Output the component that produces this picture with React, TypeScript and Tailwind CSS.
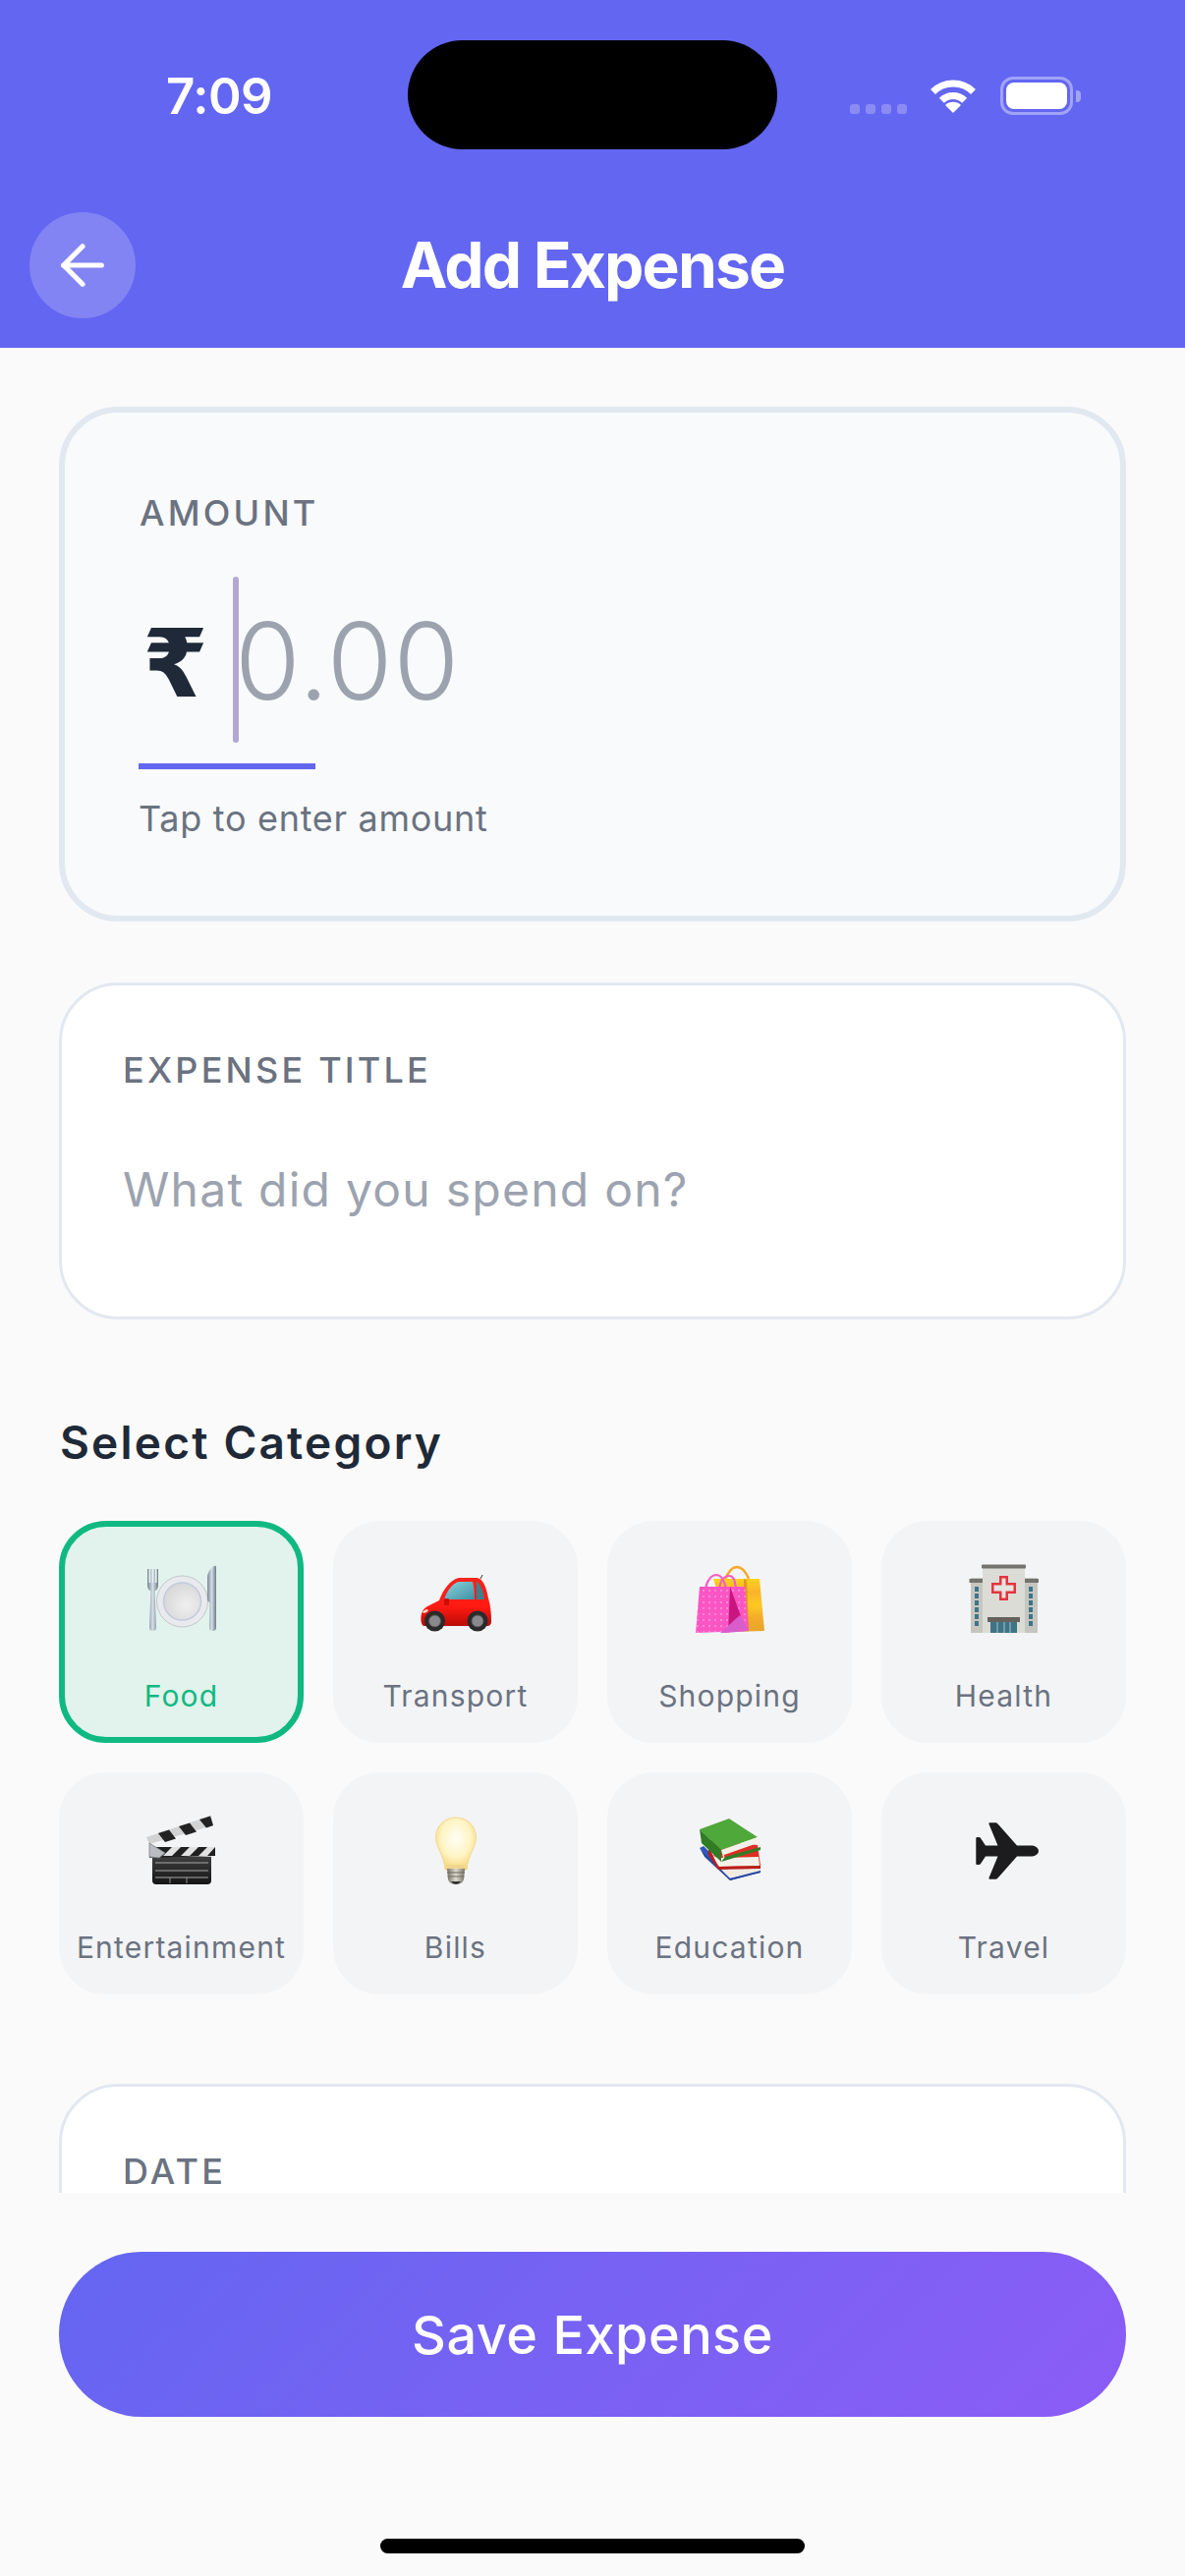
import React from "react";
import { ArrowLeft } from "lucide-react";

const PlateIcon = () => (
  <svg width="72" height="72" viewBox="0 0 72 72">
    <defs>
      <linearGradient id="steel" x1="0" y1="0" x2="1" y2="0">
        <stop offset="0" stopColor="#7d8894" />
        <stop offset="0.5" stopColor="#d3dde8" />
        <stop offset="1" stopColor="#707b87" />
      </linearGradient>
      <radialGradient id="plateIn" cx="0.6" cy="0.6" r="0.7">
        <stop offset="0" stopColor="#f0f0f0" />
        <stop offset="1" stopColor="#d4d4d6" />
      </radialGradient>
    </defs>
    <path d="M1 5h1.600v14h1.500V5h1.700v14h1.500V5H9v14h1.600V5H12v17c0 3-2 5-3.400 5.500L10 64c.1 3-1.500 4-3.500 4S2.900 67 3 64l1.400-36.500C2.700 27 1 25 1 22z" fill="url(#steel)" />
    <circle cx="36.500" cy="38" r="26" fill="#e8eaee" stroke="#b9bcc2" strokeWidth="0.800" />
    <circle cx="36.500" cy="38" r="19" fill="url(#plateIn)" stroke="#c2cbdc" strokeWidth="1.500" />
    <path d="M69 2c1-.5 2-.3 2 1v62c0 2-1.500 3-3.500 3S64 67 64 65l.5-26c-1.500-.5-2.500-1.500-2.500-3V14c0-5 3-9.500 7-12z" fill="url(#steel)" />
  </svg>
);

const CarIcon = () => (
  <svg width="72" height="72" viewBox="0 0 72 72">
    <defs>
      <linearGradient id="carBody" x1="0" y1="0" x2="0" y2="1">
        <stop offset="0" stopColor="#f4261d" />
        <stop offset="0.6" stopColor="#ff1a12" />
        <stop offset="1" stopColor="#b80a06" />
      </linearGradient>
      <linearGradient id="carGlass" x1="0" y1="0" x2="1" y2="1">
        <stop offset="0" stopColor="#8ed5dc" />
        <stop offset="1" stopColor="#3f8fa6" />
      </linearGradient>
    </defs>
    <path d="M61 15l2-4" stroke="#333" strokeWidth="1" />
    <path d="M0.500 58C0 50 2 45 9 42l10-5c4-11 11-21 20-23h18c6 0 10 9 12 21 2 6 3 14 3 23 0 4-2 5-4 5H4c-2 0-3-2-3.500-5z" fill="url(#carBody)" />
    <path d="M24 36c3-9 9-17 15-18h14c1.500 5 2 12 2 18z" fill="url(#carGlass)" />
    <path d="M57 18c4 2 7 10 8 18h-8c0-6 0-12 0-18z" fill="#3f7f8f" />
    <rect x="24" y="35" width="5" height="7" rx="1" fill="#c80f0a" />
    <ellipse cx="5" cy="48" rx="3" ry="1.500" fill="#ffd0c8" transform="rotate(-25 5 48)" />
    <circle cx="14.500" cy="58" r="10.500" fill="#2a2a2c" />
    <circle cx="14.500" cy="58" r="6" fill="#8a8a8e" stroke="#555" strokeWidth="1" />
    <circle cx="58" cy="58" r="10.500" fill="#2a2a2c" />
    <circle cx="58" cy="58" r="6" fill="#8a8a8e" stroke="#555" strokeWidth="1" />
  </svg>
);

const BagsIcon = () => (
  <svg width="72" height="72" viewBox="0 0 72 72">
    <defs>
      <linearGradient id="yellowBag" x1="0" y1="0" x2="0" y2="1">
        <stop offset="0" stopColor="#ffd21f" />
        <stop offset="0.25" stopColor="#f7b52a" />
        <stop offset="0.5" stopColor="#ffc822" />
        <stop offset="0.75" stopColor="#f2ab2a" />
        <stop offset="1" stopColor="#e8a52a" />
      </linearGradient>
      <pattern id="dots" width="6" height="6" patternUnits="userSpaceOnUse">
        <circle cx="3" cy="3" r="0.800" fill="#ffc4ea" />
      </pattern>
    </defs>
    <path d="M31 16c3-8 7-13 12-13s9 5 12 12" fill="none" stroke="#f7a828" strokeWidth="2.500" />
    <path d="M19 15h47l5 53-36 1z" fill="url(#yellowBag)" />
    <path d="M50 15l3 1 2 50-6 2z" fill="#d8861e" opacity="0.700" />
    <path d="M11 26c1-9 6-15 11-15s8 5 10 14M25 26c1-9 5-14 10-14s6 5 7 14" fill="none" stroke="#f55fc1" strokeWidth="2.200" />
    <path d="M5 23h46l4 45-54 2z" fill="#fb55c4" />
    <path d="M5 23h46l4 45-54 2z" fill="url(#dots)" />
    <path d="M36 23l-2 47 13-17z" fill="#c9157f" />
    <path d="M26 70l20-18 9 16-23 2z" fill="#d95ccb" />
  </svg>
);

const HospitalIcon = () => (
  <svg width="72" height="72" viewBox="0 0 72 72">
    <rect x="2" y="14" width="68" height="56" fill="#c6c6c0" />
    <rect x="0.500" y="15" width="14" height="4" fill="#75736e" />
    <rect x="57" y="15" width="14" height="4" fill="#75736e" />
    <rect x="14" y="2" width="43" height="68" fill="#dcdcd6" />
    <rect x="13" y="0.500" width="45" height="4" rx="1" fill="#75736e" />
    <path d="M31 12h9v7h8v11h-8v7h-9v-7h-8V19h8z" fill="#e5343d" />
    <path d="M33.500 14.500h4v7h8v6h-8v7h-4v-7h-8v-6h8z" fill="#e4e4e0" />
    <rect x="19" y="54" width="33" height="5" fill="#66625f" />
    <rect x="22" y="59" width="27" height="11" fill="#3d7486" />
    <path d="M29 59v11M36 59v11M42 59v11" stroke="#a7c1c9" strokeWidth="1" />
    {[23, 30, 37, 44, 51, 58].map((y) => (
      <g key={y}>
        <rect x="6" y={y} width="4" height="5" fill="#3f7488" />
        <rect x="61" y={y} width="4" height="5" fill="#3f7488" />
      </g>
    ))}
  </svg>
);

const ClapperIcon = () => (
  <svg width="72" height="72" viewBox="0 0 72 72">
    <defs>
      <linearGradient id="clapBody" x1="0" y1="0" x2="0" y2="1">
        <stop offset="0" stopColor="#3d3d3d" />
        <stop offset="1" stopColor="#151515" />
      </linearGradient>
    </defs>
    <path d="M6 42h60v24a4 4 0 0 1-4 4H10a4 4 0 0 1-4-4z" fill="url(#clapBody)" />
    <path d="M3 32h67v9l-67 2z" fill="#202020" />
    <path d="M17 41l9-9h9l-9 9zM35 41l9-9h9l-9 9zM53 41l9-9h8l-8 9z" fill="#e2e2e2" />
    <path d="M9 48h54M9 56h54M9 63h54" stroke="#a8a8a8" strokeWidth="1" />
    <path d="M24 63v6M41 63v6" stroke="#a8a8a8" strokeWidth="0.800" />
    <path d="M0 22L66 0l2 10L3 29z" fill="#d2d2d2" />
    <path d="M12 18l11-3.500 7 9-11 3.500zM33 11l11-3.500 7 9-11 3.500zM54 4l11-3.500 3 9.500-7 2.500z" fill="#222" />
    <path d="M3 28l16 10-6 5-10-1z" fill="#b9bdc2" stroke="#7e8388" strokeWidth="0.800" />
  </svg>
);

const BulbIcon = () => (
  <svg width="72" height="72" viewBox="0 0 72 72">
    <defs>
      <radialGradient id="bulb" cx="0.500" cy="0.400" r="0.600">
        <stop offset="0" stopColor="#fffef6" />
        <stop offset="0.600" stopColor="#fff4c4" />
        <stop offset="1" stopColor="#f6d77e" />
      </radialGradient>
      <linearGradient id="screw" x1="0" y1="0" x2="1" y2="0">
        <stop offset="0" stopColor="#77726a" />
        <stop offset="0.500" stopColor="#e0dccf" />
        <stop offset="1" stopColor="#77726a" />
      </linearGradient>
    </defs>
    <path d="M36 2c11.500 0 20.500 8.500 20.500 20 0 11-8 17-9.500 33H25C23.500 39 15.500 33 15.500 22 15.500 10.500 24.500 2 36 2z" fill="url(#bulb)" stroke="#f0d488" strokeWidth="0.800" />
    <rect x="27" y="50" width="18" height="5" fill="#f0d58c" />
    <path d="M27 54h18l-1 11c-1 3-3 5-8 5s-7-2-8-5z" fill="url(#screw)" />
    <path d="M27 58h18M27.500 62h17" stroke="#6f6a60" strokeWidth="1" />
    <path d="M31 67h10c-1 2-3 3-5 3s-4-1-5-3z" fill="#333" />
  </svg>
);

const BooksIcon = () => (
  <svg width="72" height="72" viewBox="0 0 72 72">
    <g transform="translate(0 3)">
      <path d="M5 30l31 33 31-8-1-6-30 6L9 28z" fill="#2f55b8" />
      <path d="M9 40l27 21 31-7-1-8-31 7z" fill="#f0ece4" />
      <path d="M5 30l5 9 26 24 31-8v-2l-31 8z" fill="#2747a3" />
      <path d="M14 22l50 5 3 21-43 2z" fill="#dd2f24" />
      <path d="M16 37l9 12 41-1-1-9-41 1z" fill="#f5f1ea" />
      <path d="M14 28l10 21 43-1v3l-43 1-10-15z" fill="#b81e18" />
      <path d="M5 11l30-11 29 19-37 13z" fill="#4fa83a" />
      <path d="M27 32l37-13 3 5-37 13 1 10z" fill="#f4f1ea" />
      <path d="M5 11l22 21v12L7 25z" fill="#2e7d25" />
      <path d="M27 44l40-12 0-3-36 10z" fill="#2e7d25" />
    </g>
  </svg>
);

const PlaneIcon = () => (
  <svg width="72" height="72" viewBox="0 0 72 72">
    <g transform="translate(3 0)">
      <path d="M68 36c0-3.500-4-5.500-8-5.500H46L26.500 8.500C25.800 7.600 25 7.200 24 7.200h-5.500c-.9 0-1.300.7-1 1.500l9 21.800H14L9 23c-.4-.6-1-1-1.700-1H5.500c-.8 0-1.200.6-1.200 1.300V48.700c0 .7.400 1.300 1.200 1.300h1.800c.7 0 1.300-.4 1.700-1l5-7.500h12.500l-9 21.800c-.3.8.1 1.500 1 1.500H24c1 0 1.800-.4 2.500-1.300L46 41.500h14c4 0 8-2 8-5.500z" fill="#1c1c1e" />
    </g>
  </svg>
);

const categories = [
  { name: "Food", icon: <PlateIcon />, active: true },
  { name: "Transport", icon: <CarIcon /> },
  { name: "Shopping", icon: <BagsIcon /> },
  { name: "Health", icon: <HospitalIcon /> },
  { name: "Entertainment", icon: <ClapperIcon /> },
  { name: "Bills", icon: <BulbIcon /> },
  { name: "Education", icon: <BooksIcon /> },
  { name: "Travel", icon: <PlaneIcon /> },
];

const App = () => {
  return (
    <div className="flex h-[2622px] w-[1206px] flex-col overflow-hidden bg-[#fafafa] [font-family:Inter,sans-serif]">
      {/* Header */}
      <header className="relative h-[354px] shrink-0 bg-[#6366f1] text-white">
        <div className="absolute left-[415px] top-[41px] h-[111px] w-[376px] rounded-[56px] bg-black" />
        <div className="flex h-[196px] items-start justify-between pl-[169px] pr-[106px] pt-[68px]">
          <span className="text-[51px] font-semibold leading-[60px] tracking-[-0.500px]">7:09</span>
          <div className="flex items-start pt-[10px]">
            <div className="mt-[28px] flex gap-[6px]">
              <span className="h-[10px] w-[10px] rounded-[3px] bg-white/25" />
              <span className="h-[10px] w-[10px] rounded-[3px] bg-white/25" />
              <span className="h-[10px] w-[10px] rounded-[3px] bg-white/25" />
              <span className="h-[10px] w-[10px] rounded-[3px] bg-white/25" />
            </div>
            <svg className="ml-[22px]" width="50" height="37" viewBox="0 0 50 37" fill="none">
              <path d="M4.500 15.500a29 29 0 0 1 41 0" stroke="white" strokeWidth="7" />
              <path d="M13.300 24.300a16.500 16.500 0 0 1 23.400 0" stroke="white" strokeWidth="7" />
              <path d="M25 37l-8-8a11.300 11.300 0 0 1 16 0z" fill="white" />
            </svg>
            <div className="ml-[23px] flex items-center">
              <div className="h-[39px] w-[74px] rounded-[13px] border-[3px] border-white/40 p-[3px]">
                <div className="h-full w-full rounded-[8px] bg-white" />
              </div>
              <div className="ml-[3px] h-[12px] w-[5px] rounded-r-[4px] bg-white/40" />
            </div>
          </div>
        </div>
        <div className="relative mt-[20px] flex h-[108px] items-center justify-center">
          <button className="absolute left-[30px] top-0 flex h-[108px] w-[108px] items-center justify-center rounded-full bg-white/20">
            <ArrowLeft size={66} strokeWidth={1.9} color="white" />
          </button>
          <h1 className="text-[64px] font-bold leading-[72px] tracking-[-1.800px]">Add Expense</h1>
        </div>
      </header>

      {/* Scroll area */}
      <main className="h-[1878px] shrink-0 overflow-hidden px-[60px] pt-[60px]">
        <section className="h-[524px] rounded-[60px] border-[6px] border-[#e2e8f0] bg-[#f8fafc] pl-[75px] pt-[80px]">
          <p className="ml-[1px] text-[36px] font-medium leading-[44px] tracking-[3.200px] text-[#6b7280]">AMOUNT</p>
          <div className="mt-[43px] w-[180px] border-b-[6px] border-[#6366f1] pb-[21px]">
            <div className="flex h-[169px] items-center">
              <span className="ml-[4px] w-[62px] shrink-0 pt-[8px] text-center text-[96px] font-bold leading-none text-[#1f2937] [font-family:'DejaVu_Sans',sans-serif]">₹</span>
              <span className="ml-[30px] h-[169px] w-[6px] shrink-0 rounded-[3px] bg-[#b3a7d1]" />
              <span className="-ml-[4px] pt-[2px] text-[108px] font-light leading-none tracking-[1px] text-[#9ca3af]">0.00</span>
            </div>
          </div>
          <p className="mt-[28px] text-[36px] leading-[44px] tracking-[0.700px] text-[#6b7280]">Tap to enter amount</p>
        </section>

        <section className="mt-[62px] h-[343px] rounded-[60px] border-[3px] border-[#e2e8f0] bg-white pl-[62px] pt-[64px]">
          <p className="text-[36px] font-medium leading-[44px] tracking-[3.200px] text-[#6b7280]">EXPENSE TITLE</p>
          <p className="mt-[70px] text-[48px] leading-[60px] tracking-[1.250px] text-[#9ca3af]">What did you spend on?</p>
        </section>

        <h2 className="ml-[1px] mt-[95px] text-[46px] font-semibold leading-[60px] tracking-[2.200px] text-[#1f2937]">Select Category</h2>

        <div className="mt-[50px] grid grid-cols-4 gap-[30px]">
          {categories.map((cat) => (
            <div
              key={cat.name}
              className={
                cat.active
                  ? "flex h-[226px] flex-col items-center rounded-[48px] border-[6px] border-[#10b981] bg-[#e1f3ec] pt-[38px]"
                  : "flex h-[226px] flex-col items-center rounded-[48px] border-[6px] border-[#f3f4f6] bg-[#f3f4f6] pt-[38px]"
              }
            >
              {cat.icon}
              <span
                className={
                  cat.active
                    ? "mt-[44px] text-[30px] leading-[36px] tracking-[1.200px] text-[#10b981]"
                    : "mt-[44px] text-[30px] leading-[36px] tracking-[1.200px] text-[#6b7280]"
                }
              >
                {cat.name}
              </span>
            </div>
          ))}
        </div>

        <section className="mt-[91px] h-[343px] rounded-[60px] border-[3px] border-[#e2e8f0] bg-white pl-[62px] pt-[64px]">
          <p className="text-[36px] font-medium leading-[44px] tracking-[3.200px] text-[#6b7280]">DATE</p>
        </section>
      </main>

      {/* Bottom bar */}
      <footer className="flex-1 px-[60px] pt-[60px]">
        <button className="h-[168px] w-full rounded-full bg-linear-135 from-[#6366f1] to-[#8b5cf6] text-[54px] font-medium tracking-[0.500px] text-white">
          Save Expense
        </button>
        <div className="mx-auto mt-[124px] h-[15px] w-[432px] rounded-[8px] bg-black" />
      </footer>
    </div>
  );
};

export default App;
